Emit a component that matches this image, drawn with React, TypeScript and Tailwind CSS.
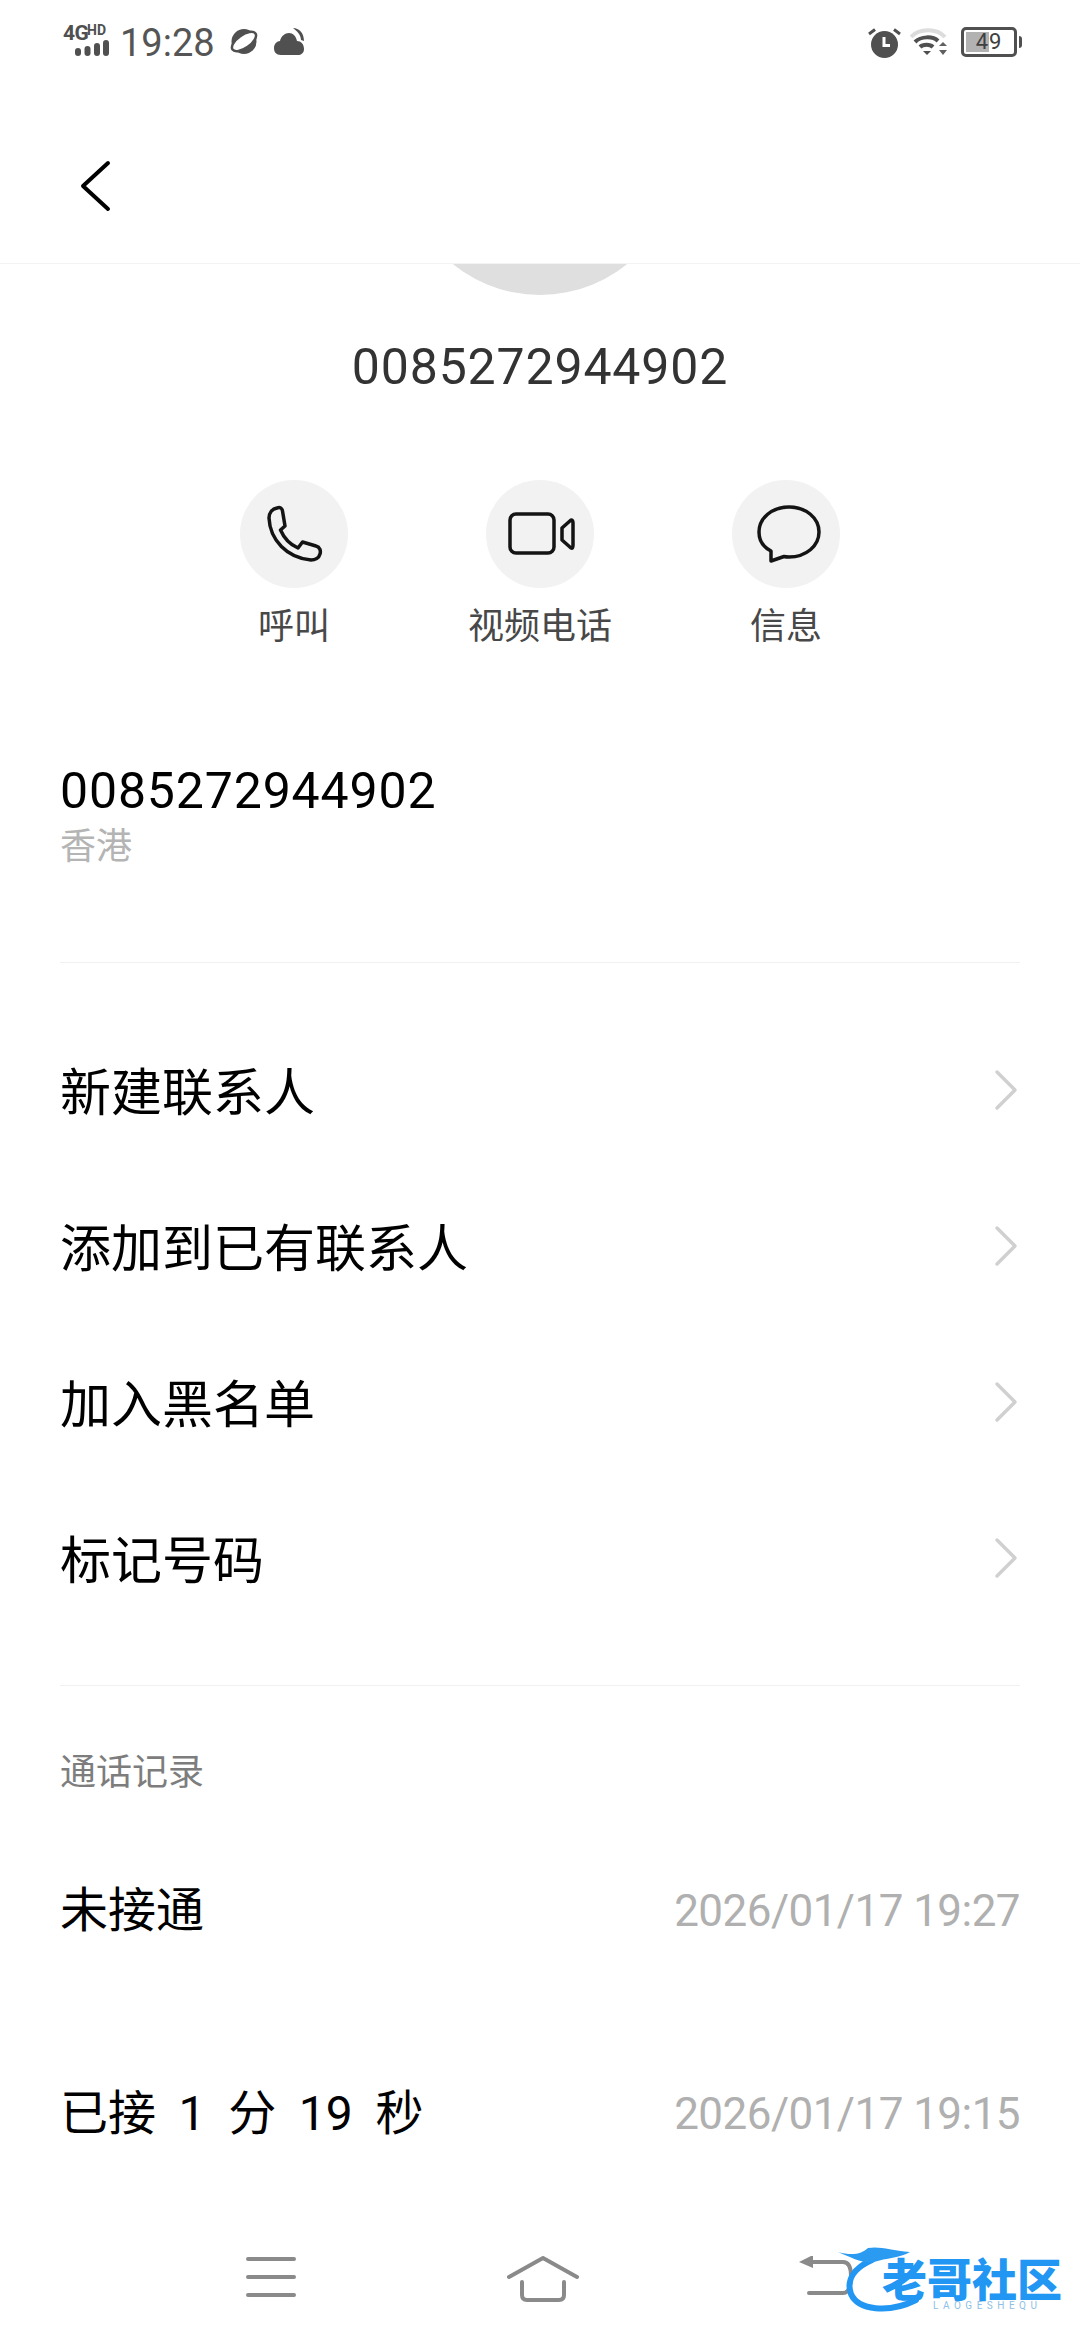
const menuItems = ["新建联系人", "添加到已有联系人", "加入黑名单", "标记号码"];

const callLog = [
  { label: "未接通", time: "2026/01/17 19:27", className: "mt-[58px]" },
  { label: "已接  1  分  19  秒", time: "2026/01/17 19:15", className: "mt-[103px]" },
];

export default function App() {
  return (
    <div className="w-[1080px] h-[2340px] overflow-hidden bg-white font-[Roboto,'Noto_Sans_CJK_SC',sans-serif]">
      <StatusBar />
      <Header />
      {/* avatar is mostly scrolled under the header */}
      <div className="h-[31px] overflow-hidden flex justify-center">
        <div className="w-[276px] h-[276px] shrink-0 -mt-[245px] rounded-full bg-[#dfdfdf]"></div>
      </div>
      <div className="h-[144px] flex items-center justify-center text-[50px] tracking-[0.85px] text-[#333333]">0085272944902</div>
      <Actions />
      <div className="mt-[111px] px-[60px]">
        <div className="h-[56px] leading-[56px] text-[50px] tracking-[0.85px] text-black">0085272944902</div>
        <div className="mt-[6px] h-[44px] leading-[44px] text-[36px] text-[#b4b4b4]">香港</div>
      </div>
      <div className="mt-[93px] mx-[60px] h-px bg-[#f1f1f1]"></div>
      <div className="mt-[51px]">
        {menuItems.map((item) => (
          <div key={item} className="h-[156px] pl-[60px] pr-[62px] flex items-center justify-between text-[51px] text-black">
            <span className="mt-[4px]">{item}</span>
            <svg className="-mt-[4px]" width="26" height="42" viewBox="0 0 26 42" fill="none" stroke="#d0d0d0" strokeWidth="3.5" strokeLinecap="round" strokeLinejoin="round">
              <path d="M5 3 L23 21 L5 39" />
            </svg>
          </div>
        ))}
      </div>
      <div className="mt-[47px] mx-[60px] h-px bg-[#f1f1f1]"></div>
      <div className="mt-[57px] h-[60px] px-[60px] flex items-center text-[36px] text-[#7d7d7d]">通话记录</div>
      {callLog.map((row) => (
        <div key={row.time} className={`${row.className} h-[100px] px-[60px] flex items-center justify-between`}>
          <span className="text-[48px] text-black whitespace-pre [word-spacing:-0.6px]">{row.label}</span>
          <span className="text-[44px] tracking-[-0.55px] text-[#b0b0b0]">{row.time}</span>
        </div>
      ))}
      <NavBar />
    </div>
  );
}

function StatusBar() {
  return (
    <div className="h-[80px] pt-[25px] pl-[63px] pr-[58px] flex items-start justify-between text-[#505050]">
      <div className="flex items-start">
        <div className="w-[46px] h-[32px] relative">
          <span className="absolute left-0 top-[-3px] text-[21px] leading-[22px] font-bold tracking-[-0.5px]">4G</span>
          <span className="absolute left-[24px] top-[-2px] text-[14px] leading-[14px] font-bold">HD</span>
          <svg className="absolute left-[12px] top-[15px]" width="34" height="16" viewBox="0 0 34 16" fill="#505050">
            <rect x="0" y="8" width="6" height="8" rx="3" />
            <rect x="9.5" y="6" width="6" height="10" rx="3" />
            <rect x="19" y="3" width="6" height="13" rx="3" />
            <rect x="28" y="0" width="6" height="16" rx="3" />
          </svg>
        </div>
        <span className="ml-[11px] text-[38px] leading-[36px] text-[#555555]">19:28</span>
        <svg className="ml-[14px] mt-[3px]" width="30" height="27" viewBox="0 0 30 27">
          <circle cx="15" cy="13.5" r="12.5" fill="#505050" />
          <ellipse cx="15" cy="13.5" rx="14" ry="6.5" transform="rotate(-35 15 13.5)" fill="#ffffff" stroke="#505050" strokeWidth="2.5" />
        </svg>
        <svg className="ml-[15px] mt-[3px]" width="30" height="27" viewBox="0 0 30 27" fill="#505050">
          <path d="M19 0 C25 0 30 5 30 13 L27 12 C27 7 23 3 19 0 Z" />
          <path d="M7 27 C2 27 0 24 0 20 C0 16 3 13 6 13 C7 8 11 5 15 5 C19 5 22 8 23 13 C27 13 30 16 30 21 C30 25 27 27 24 27 Z" />
        </svg>
      </div>
      <div className="flex items-start">
        <svg className="mt-[3px]" width="33" height="30" viewBox="0 0 33 30">
          <circle cx="16.5" cy="16.5" r="13.5" fill="#505050" />
          <path d="M16 9 V17.5 H22" fill="none" stroke="#ffffff" strokeWidth="3" />
          <path d="M1 6 L7 1.5 M32 6 L26 1.5" stroke="#505050" strokeWidth="3" />
        </svg>
        <svg className="ml-[9px] mt-[3px]" width="38" height="28" viewBox="0 0 38 28" fill="none">
          <path d="M1 9 C9 0 27 0 35 9" stroke="#dcdcdc" strokeWidth="4" />
          <path d="M5 14 C11 8 23 8 28 13" stroke="#505050" strokeWidth="4" />
          <path d="M10 19 C13 16 20 16 23 19" stroke="#505050" strokeWidth="4" />
          <path d="M13 23 H21 L17 27 Z" fill="#505050" />
          <path d="M29 18 L33 14 L37 18 Z M29 22 H37 L33 27 Z" fill="#606060" />
        </svg>
        <div className="ml-[13px] w-[56px] h-[30px] mt-[2px] rounded-[5px] border-[3px] border-[#505050] relative overflow-hidden">
          <div className="absolute left-[2px] top-[2px] bottom-[2px] w-[23px] bg-[#b2b2b2]"></div>
          <span className="absolute inset-0 flex items-center justify-center text-[22px] leading-none tracking-[1px] text-[#404040]">49</span>
        </div>
        <div className="ml-[2px] mt-[11px] w-[3px] h-[12px] rounded-r-full bg-[#505050]"></div>
      </div>
    </div>
  );
}

function Header() {
  return (
    <div className="h-[184px] pl-[80px] pt-[80px] border-b border-[#f3f3f3]">
      <svg width="32" height="52" viewBox="0 0 32 52" fill="none" stroke="#000000" strokeWidth="4" strokeLinecap="round" strokeLinejoin="round">
        <path d="M28 3 L3 26 L28 49" />
      </svg>
    </div>
  );
}

function Actions() {
  return (
    <div className="mt-[41px] flex justify-center gap-[138px]">
      <ActionButton label="呼叫">
        <path d="M37 28 C40 27 42 28 42.5 31 L45 46 L40.5 50 C44 58 51 65 58 68 L62.5 62 L76 66 C80 67 81 71 80 74 C79 78 75 80 71 80 C47 78 30 60 29 38 C29 33 32 29 37 28 Z" />
      </ActionButton>
      <ActionButton label="视频电话">
        <rect x="24" y="34" width="44" height="39" rx="6" />
        <path d="M85 40 Q87 40 87 43 V65 Q87 69 85 68 L76 60 V48 Z" />
      </ActionButton>
      <ActionButton label="信息">
        <path d="M57 27 C40 27 27 38 27 52 C27 60 31 67 39 71 L39 81 L52 76.5 C54 77 55.5 77 57 77 C74 77 87 66 87 52 C87 38 74 27 57 27 Z" />
      </ActionButton>
    </div>
  );
}

function ActionButton({ label, children }: { label: string; children: React.ReactNode }) {
  return (
    <div className="w-[108px] flex flex-col items-center">
      <div className="w-[108px] h-[108px] rounded-full bg-[#f2f2f2]">
        <svg width="108" height="108" viewBox="0 0 108 108" fill="none" stroke="#141414" strokeWidth="3.5" strokeLinejoin="round">
          {children}
        </svg>
      </div>
      <span className="mt-[14px] h-[50px] leading-[50px] text-[36px] text-[#484848] whitespace-nowrap">{label}</span>
    </div>
  );
}

function NavBar() {
  return (
    <div className="mt-[56px] h-[120px] relative flex items-start pl-[246px] pt-[36px]">
      <svg width="50" height="42" viewBox="0 0 50 42" stroke="#8a8a8a" strokeWidth="4" strokeLinecap="round">
        <path d="M2 3 H48 M2 21 H48 M2 39 H48" />
      </svg>
      <svg className="ml-[211px]" width="72" height="46" viewBox="0 0 72 46" fill="none" stroke="#8a8a8a" strokeWidth="4" strokeLinecap="round" strokeLinejoin="round">
        <path d="M2 21 L36 2 L70 21" />
        <path d="M15 26 V39 Q15 44 20 44 H52 Q57 44 57 39 V26" />
      </svg>
      <svg className="ml-[220px]" width="54" height="42" viewBox="0 0 54 42" fill="none" stroke="#8a8a8a" strokeWidth="4" strokeLinecap="round">
        <path d="M12 6 H44 Q52 6 52 20 Q52 37 44 37 H10" />
        <path d="M0 6 L14 -1 V12 Z" fill="#8a8a8a" stroke="none" />
      </svg>
      <Watermark />
    </div>
  );
}

// site watermark stamped over the bottom right corner
function Watermark() {
  return (
    <div className="absolute left-[838px] top-[24px] w-[232px] h-[72px]">
      <svg className="absolute left-0 top-0" width="110" height="72" viewBox="0 0 110 72" fill="none">
        <path d="M34 16 C16 24 8 36 13 50 C20 66 50 70 78 56" stroke="#2196f3" strokeWidth="6" strokeLinecap="round" />
        <path d="M0 8 C14 12 24 10 30 4 C42 2 52 6 72 8 C62 14 48 14 36 18 C26 20 14 14 0 8 Z" fill="#2a9bf0" />
      </svg>
      <span className="absolute left-[44px] top-[20px] text-[45px] leading-[36px] font-black text-[#2196f3] whitespace-nowrap">老哥社区</span>
      <span className="absolute left-[95px] top-[57px] text-[10px] leading-[10px] tracking-[4.5px] text-[#8dbfe8] whitespace-nowrap">LAOGESHEQU</span>
    </div>
  );
}
